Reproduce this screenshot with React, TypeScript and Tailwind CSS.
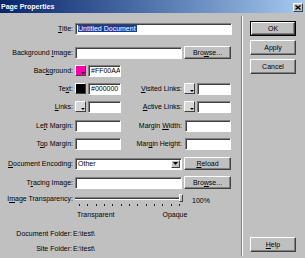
import React from "react";

function Field({ w, children }: { w: string; children?: React.ReactNode }) {
  return (
    <div
      className={`${w} h-[12px] shrink-0 bg-white border border-t-[#808080] border-l-[#808080] border-b-white border-r-white shadow-[inset_1px_1px_0_#404040] flex items-center pl-[2px] overflow-hidden whitespace-nowrap`}
    >
      {children}
    </div>
  );
}

function Btn({ w, h, children, def }: { w: string; h: string; children: React.ReactNode; def?: boolean }) {
  const inner = (
    <div
      className={`w-full h-full bg-[#c0c0c0] border border-t-white border-l-white border-b-[#404040] border-r-[#404040] shadow-[inset_-1px_-1px_0_#808080] flex items-center justify-center whitespace-nowrap`}
    >
      {children}
    </div>
  );
  if (def) {
    return <div className={`${w} ${h} shrink-0 border border-black`}>{inner}</div>;
  }
  return <div className={`${w} ${h} shrink-0`}>{inner}</div>;
}

function Swatch({ color }: { color: string }) {
  return (
    <div className="relative w-[11px] h-[11px] shrink-0 border border-t-white border-l-white border-b-[#404040] border-r-[#404040]">
      <div className={`w-full h-full ${color}`} />
      <svg width="4" height="3" className="absolute right-0 bottom-0">
        <polygon points="0,0 4,0 2,2" fill="#000" />
      </svg>
    </div>
  );
}

function Label({ children, w }: { children: React.ReactNode; w: string }) {
  return <div className={`${w} shrink-0 text-right pr-[2px] whitespace-nowrap`}>{children}</div>;
}

const U = ({ c }: { c: string }) => <span className="underline">{c}</span>;

export default function App() {
  return (
    <div className="w-[305px] h-[258px] bg-[#c0c0c0] overflow-hidden flex flex-col text-[7px] leading-none text-black font-['Liberation_Sans',Arial,sans-serif]">
      {/* Title bar */}
      <div className="h-[13px] shrink-0 bg-linear-to-r from-[#0a246a] to-[#a6caf0] flex items-center justify-between pl-[1px] pr-[2px]">
        <span className="text-white font-bold">Page Properties</span>
        <div className="w-[10px] h-[9px] mt-[1px] bg-[#c0c0c0] border border-t-white border-l-white border-b-[#404040] border-r-[#404040] flex items-center justify-center">
          <svg width="6" height="5" viewBox="0 0 6 5">
            <path d="M0.5 0.5 L5.5 4.5 M5.5 0.5 L0.5 4.5" stroke="#000" strokeWidth="1.3" />
          </svg>
        </div>
      </div>

      <div className="flex flex-1">
        {/* Left content */}
        <div className="w-[241px] shrink-0 flex flex-col">
          {/* Title */}
          <div className="flex items-center h-[13px] mt-[9px]">
            <Label w="w-[75px]">
              <U c="T" />itle:
            </Label>
            <Field w="w-[157px]">
              <span className="bg-[#1c3a9a] text-white pr-[1px]">Untitled Document</span>
            </Field>
          </div>
          {/* Background Image */}
          <div className="flex items-center h-[13px] mt-[11px]">
            <Label w="w-[75px]">
              Background <U c="I" />mage:
            </Label>
            <Field w="w-[107px]" />
            <div className="ml-[2px]">
              <Btn w="w-[47px]" h="h-[13px]">
                Bro<U c="w" />se...
              </Btn>
            </div>
          </div>
          {/* Background */}
          <div className="flex items-center h-[13px] mt-[5px]">
            <Label w="w-[75px]">
              Bac<U c="k" />ground:
            </Label>
            <Swatch color="bg-[#ff00aa]" />
            <div className="ml-[2px]">
              <Field w="w-[33px]">#FF00AA</Field>
            </div>
          </div>
          {/* Text / Visited */}
          <div className="flex items-center h-[13px] mt-[5px]">
            <Label w="w-[75px]">
              Te<U c="x" />t:
            </Label>
            <Swatch color="bg-black" />
            <div className="ml-[2px]">
              <Field w="w-[33px]">#000000</Field>
            </div>
            <Label w="w-[63px]">
              <U c="V" />isited Links:
            </Label>
            <Swatch color="bg-[#d8d8d8]" />
            <div className="ml-[2px]">
              <Field w="w-[34px]" />
            </div>
          </div>
          {/* Links / Active */}
          <div className="flex items-center h-[13px] mt-[5px]">
            <Label w="w-[75px]">
              <U c="L" />inks:
            </Label>
            <Swatch color="bg-[#d8d8d8]" />
            <div className="ml-[2px]">
              <Field w="w-[33px]" />
            </div>
            <Label w="w-[63px]">
              <U c="A" />ctive Links:
            </Label>
            <Swatch color="bg-[#d8d8d8]" />
            <div className="ml-[2px]">
              <Field w="w-[34px]" />
            </div>
          </div>
          {/* Left Margin / Margin Width */}
          <div className="flex items-center h-[13px] mt-[6px]">
            <Label w="w-[75px]">Le<U c="f" />t Margin:</Label>
            <Field w="w-[46px]" />
            <Label w="w-[63px]">
              Margin <U c="W" />idth:
            </Label>
            <div className="ml-[1px]">
              <Field w="w-[46px]" />
            </div>
          </div>
          {/* Top Margin / Margin Height */}
          <div className="flex items-center h-[13px] mt-[5px]">
            <Label w="w-[75px]">
              T<U c="o" />p Margin:
            </Label>
            <Field w="w-[46px]" />
            <Label w="w-[63px]">
              Mar<U c="g" />in Height:
            </Label>
            <div className="ml-[1px]">
              <Field w="w-[46px]" />
            </div>
          </div>
          {/* Document Encoding */}
          <div className="flex items-center h-[13px] mt-[7px]">
            <Label w="w-[75px]">
              <U c="D" />ocument Encoding:
            </Label>
            <div className="w-[107px] h-[12px] shrink-0 bg-white border border-t-[#808080] border-l-[#808080] border-b-white border-r-white shadow-[inset_1px_1px_0_#404040] flex items-center justify-between pl-[2px] pr-[1px]">
              <span>Other</span>
              <div className="w-[9px] h-[8px] bg-[#c0c0c0] border border-t-white border-l-white border-b-[#404040] border-r-[#404040] flex items-center justify-center">
                <svg width="5" height="3" viewBox="0 0 5 3">
                  <polygon points="0,0 5,0 2.5,3" fill="#000" />
                </svg>
              </div>
            </div>
            <div className="ml-[2px]">
              <Btn w="w-[47px]" h="h-[13px]">
                <U c="R" />eload
              </Btn>
            </div>
          </div>
          {/* Tracing Image */}
          <div className="flex items-center h-[13px] mt-[6px]">
            <Label w="w-[75px]">
              T<U c="r" />acing Image:
            </Label>
            <Field w="w-[107px]" />
            <div className="ml-[2px]">
              <Btn w="w-[47px]" h="h-[13px]">
                Bro<U c="w" />se...
              </Btn>
            </div>
          </div>
          {/* Image Transparency */}
          <div className="flex items-center h-[9px] mt-[5px]">
            <Label w="w-[75px]">
              I<U c="m" />age Transparency:
            </Label>
            <div className="relative w-[108px] h-[9px] shrink-0">
              <div className="absolute left-0 right-0 top-[3px] h-[3px] border-t border-t-[#808080] border-b border-b-white bg-[#404040]" />
              <div className="absolute left-[104px] top-0 w-[4px] h-[8px] bg-[#c0c0c0] border border-t-white border-l-white border-b-[#404040] border-r-[#404040]" />
            </div>
            <span className="ml-[9px] mt-[3px]">100%</span>
          </div>
          {/* ticks */}
          <div className="flex mt-[1px] h-[2px]">
            <div className="ml-[79px] w-[101px] flex justify-between">
              {Array.from({ length: 13 }).map((_, i) => (
                <div key={i} className="w-[1px] h-[2px] bg-[#202020]" />
              ))}
            </div>
          </div>
          {/* Transparent / Opaque */}
          <div className="flex items-center h-[8px] mt-[4px]">
            <span className="ml-[77px]">Transparent</span>
            <span className="ml-[48px]">Opaque</span>
          </div>
          {/* Document Folder */}
          <div className="flex items-center h-[8px] mt-[11px]">
            <div className="w-[73px] text-right pr-[1px] whitespace-nowrap">Document Folder:</div>
            <span>E:\test\</span>
          </div>
          {/* Site Folder */}
          <div className="flex items-center h-[8px] mt-[7px]">
            <div className="w-[73px] text-right pr-[1px] whitespace-nowrap">Site Folder:</div>
            <span>E:\test\</span>
          </div>
        </div>

        {/* Separator */}
        <div className="w-[2px] shrink-0 border-l border-l-[#808080] border-r border-r-white mt-[3px] mb-[2px]" />

        {/* Right buttons */}
        <div className="flex-1 flex flex-col pl-[7px]">
          <div className="mt-[8px]">
            <Btn w="w-[46px]" h="h-[15px]" def>
              OK
            </Btn>
          </div>
          <div className="mt-[4px]">
            <Btn w="w-[46px]" h="h-[15px]">
              Apply
            </Btn>
          </div>
          <div className="mt-[4px]">
            <Btn w="w-[46px]" h="h-[15px]">
              Cancel
            </Btn>
          </div>
          <div className="mt-auto mb-[6px]">
            <Btn w="w-[46px]" h="h-[15px]">
              <U c="H" />elp
            </Btn>
          </div>
        </div>
      </div>
    </div>
  );
}
